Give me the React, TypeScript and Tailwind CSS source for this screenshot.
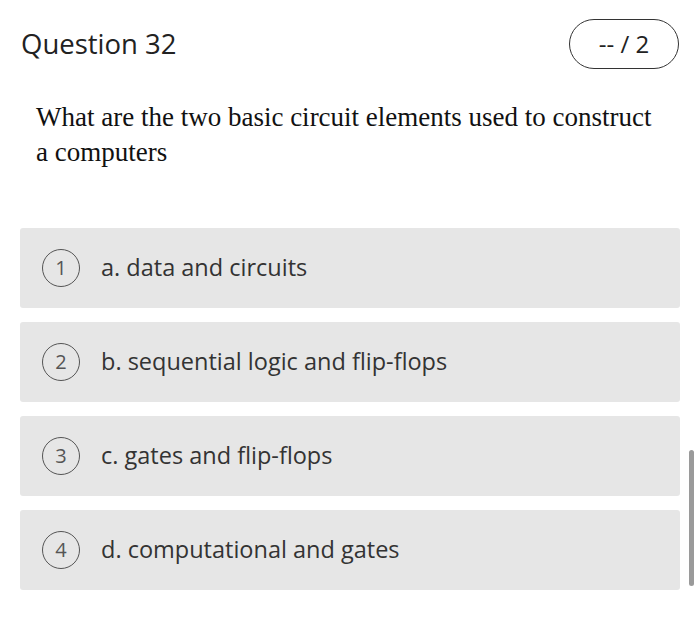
const options = [
  "a. data and circuits",
  "b. sequential logic and flip-flops",
  "c. gates and flip-flops",
  "d. computational and gates",
];

export default function App() {
  return (
    <div className="relative w-[700px] h-[618px] bg-white overflow-hidden" style={{ fontFamily: '"Open Sans", sans-serif' }}>
      <div className="flex items-center justify-between pl-[21px] pr-[21px] pt-[19px]">
        <h2 className="text-[27.5px] leading-[50px] text-[#222]">Question 32</h2>
        <div className="w-[110px] h-[50px] rounded-full border-[1.5px] border-[#333] flex items-center justify-center text-[24px] text-[#222]">
          -- / 2
        </div>
      </div>
      <p
        className="pl-[36px] pr-[30px] mt-[31px] text-[27px] leading-[35px] text-[#111]"
        style={{ fontFamily: '"Liberation Serif", serif' }}
      >
        What are the two basic circuit elements used to construct a computers
      </p>
      <div className="mt-[58px] px-[20px] flex flex-col gap-[14px]">
        {options.map((o, i) => (
          <div key={i} className="h-[80px] bg-[#e6e6e6] rounded-[3px] flex items-center pl-[22px]">
            <div className="w-[38px] h-[38px] rounded-full border-[1.5px] border-[#555] flex items-center justify-center text-[20px] text-[#555] shrink-0">
              {i + 1}
            </div>
            <span className="ml-[21px] text-[23.5px] text-[#333]">{o}</span>
          </div>
        ))}
      </div>
      <div className="absolute left-[689px] top-[450px] w-[5px] h-[136px] rounded-full bg-[#9a9a9a]" />
    </div>
  );
}
